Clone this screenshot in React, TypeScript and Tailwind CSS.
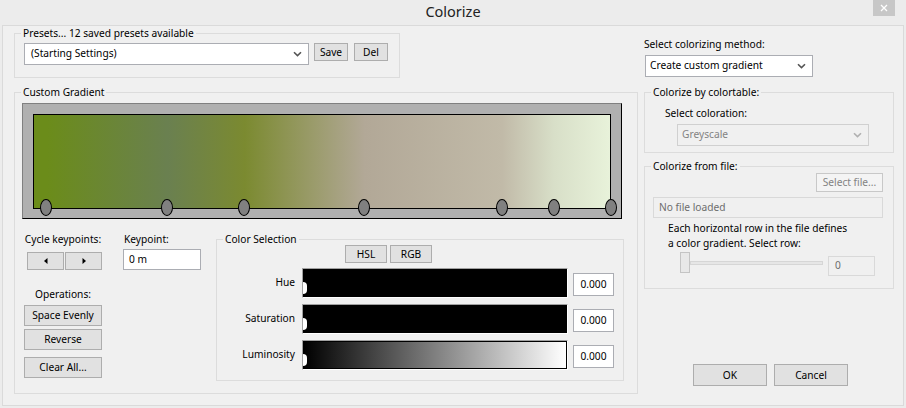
import React from 'react';

const btn = 'bg-[#e1e1e1] border border-[#adadad] flex items-center justify-center leading-none whitespace-nowrap';

const keypoints = [13, 134, 211, 331, 469, 521, 578];

function Chevron({ color = '#555' }: { color?: string }) {
    return (
        <svg width="9" height="6" viewBox="0 0 9 6">
            <path d="M1 1.2 L4.5 4.6 L8 1.2" fill="none" stroke={color} strokeWidth="1.6"/>
        </svg>
    );
}

function ColorBar({ label, luminosity }: { label: string; luminosity?: boolean }) {
    return (
        <div className="flex items-start">
            <div className="w-[78px] h-[30px] flex items-center justify-end">{label}</div>
            <div className="relative ml-[7px] w-[266px] h-[30px] border border-t-[#a0a0a0] border-l-[#a0a0a0] border-r-white border-b-white">
                {luminosity ? (
                    <div className="h-full w-full border border-black bg-[linear-gradient(to_right,#000,#fff)]"/>
                ) : (
                    <div className="h-full w-full bg-black"/>
                )}
                <div className="absolute left-0 top-[13px] w-[4px] h-[12px] bg-white rounded-r-full"/>
            </div>
            <div className="ml-[5px] mt-[5px] w-[41px] h-[23px] bg-white border border-[#abadb3] flex items-center justify-center">0.000</div>
        </div>
    );
}

export default function App() {
    return (
        <div className="w-[906px] h-[408px] bg-[#ececec] flex flex-col font-['Noto_Sans',sans-serif] text-[10.2px] text-black overflow-hidden">
            {/* title bar */}
            <div className="h-[25px] relative flex justify-center">
                <span className="text-[14.5px] leading-[23px] text-[#222]">Colorize</span>
                <div className="absolute right-[11px] top-0 w-[22px] h-[16px] bg-[#c7c7c7] flex items-center justify-center">
                    <svg width="8" height="8" viewBox="0 0 8 8">
                        <path d="M1 1L7 7M7 1L1 7" stroke="#fff" strokeWidth="1.3"/>
                    </svg>
                </div>
            </div>

            <div className="ml-[2px] w-[902px] h-[381px] border border-[#dadada] bg-[#f0f0f0] flex pl-[11px]">
                {/* left column */}
                <div className="w-[624px] flex flex-col">
                    <fieldset className="w-[386px] h-[52px] border border-[#dcdcdc]">
                        <legend className="ml-[6px] px-[2px] leading-[14px] whitespace-nowrap">Presets... 12 saved presets available</legend>
                        <div className="flex items-start mt-[3px] ml-[9px]">
                            <div className="w-[285px] h-[22px] bg-white border border-[#abadb3] flex items-center pl-[6px] pr-[6px]">
                                <span className="flex-1">(Starting Settings)</span>
                                <Chevron/>
                            </div>
                            <button className={`${btn} ml-[5px] w-[34px] h-[18px]`}>Save</button>
                            <button className={`${btn} ml-[6px] w-[34px] h-[18px]`}>Del</button>
                        </div>
                    </fieldset>

                    <fieldset className="mt-[7px] w-[624px] h-[309px] border border-[#dcdcdc]">
                        <legend className="ml-[6px] px-[2px] leading-[14px]">Custom Gradient</legend>
                        <div className="mt-[4px] ml-[7px] w-[600px] h-[116px] bg-[#b0b0b0] border border-t-[#808080] border-l-[#808080] border-r-black border-b-black pt-[10px] pl-[10px]">
                            <div className="relative w-[578px] h-[95px] border border-black bg-[linear-gradient(to_right,#6b8c1a_0%,#6b8c1a_2.3%,#6a8050_23.2%,#7b8a30_36.6%,#b2a897_57.4%,#c1baa8_81.3%,#d8dfc8_90.3%,#e8f2da_100%)]">
                                {keypoints.map((x) => (
                                    <div
                                        key={x}
                                        className="absolute top-[84px] w-[12px] h-[17px] rounded-[50%] bg-[#808080] border border-black"
                                        style={{ left: x - 7 }}
                                    />
                                ))}
                            </div>
                        </div>

                        <div className="flex items-start mt-[13px]">
                            <div className="ml-[9px] w-[78px] flex flex-col">
                                <div className="leading-[14px] text-center whitespace-nowrap -mx-[4px]">Cycle keypoints:</div>
                                <div className="flex gap-[1px] pl-[3px] mt-[6px]">
                                    <button className={`${btn} w-[37px] h-[18px]`}>
                                        <svg width="4" height="6" viewBox="0 0 4 6"><path d="M3.5 0 L0 3 L3.5 6Z" fill="#000"/></svg>
                                    </button>
                                    <button className={`${btn} w-[37px] h-[18px]`}>
                                        <svg width="4" height="6" viewBox="0 0 4 6"><path d="M0.5 0 L4 3 L0.5 6Z" fill="#000"/></svg>
                                    </button>
                                </div>
                                <div className="leading-[14px] text-center mt-[17px]">Operations:</div>
                                <button className={`${btn} mt-[4px] w-[78px] h-[21px]`}>Space Evenly</button>
                                <button className={`${btn} mt-[3px] w-[78px] h-[21px]`}>Reverse</button>
                                <button className={`${btn} mt-[7px] w-[78px] h-[21px]`}>Clear All...</button>
                            </div>

                            <div className="ml-[21px] w-[78px] flex flex-col">
                                <div className="leading-[14px] pl-[1px]">Keypoint:</div>
                                <div className="mt-[3px] h-[21px] bg-white border border-[#abadb3] flex items-center pl-[5px]">0 m</div>
                            </div>

                            <fieldset className="ml-[15px] w-[408px] h-[149px] border border-[#dcdcdc]">
                                <legend className="ml-[6px] px-[2px] leading-[14px]">Color Selection</legend>
                                <div className="flex gap-[3px] ml-[128px] -mt-[1px]">
                                    <button className={`${btn} w-[42px] h-[18px]`}>HSL</button>
                                    <button className={`${btn} w-[42px] h-[18px]`}>RGB</button>
                                </div>
                                <div className="flex flex-col gap-[6px] mt-[5px]">
                                    <ColorBar label="Hue"/>
                                    <ColorBar label="Saturation"/>
                                    <ColorBar label="Luminosity" luminosity/>
                                </div>
                            </fieldset>
                        </div>
                    </fieldset>
                </div>

                {/* right column */}
                <div className="ml-[6px] w-[250px] flex flex-col">
                    <div className="mt-[11px] leading-[14px]">Select colorizing method:</div>
                    <div className="mt-[4px] ml-[1px] w-[168px] h-[22px] bg-white border border-[#abadb3] flex items-center pl-[4px] pr-[6px]">
                        <span className="flex-1">Create custom gradient</span>
                        <Chevron/>
                    </div>

                    <fieldset className="mt-[8px] w-[250px] h-[68px] border border-[#dcdcdc]">
                        <legend className="ml-[6px] px-[2px] leading-[14px]">Colorize by colortable:</legend>
                        <div className="mt-[7px] ml-[20px] leading-[14px]">Select coloration:</div>
                        <div className="mt-[4px] ml-[32px] w-[192px] h-[22px] bg-[#f0f0f0] border border-[#d0d0d0] flex items-center pl-[4px] pr-[6px] text-[#838383]">
                            <span className="flex-1">Greyscale</span>
                            <Chevron color="#b0b0b0"/>
                        </div>
                    </fieldset>

                    <fieldset className="mt-[6px] w-[250px] h-[130px] border border-[#dcdcdc] flex flex-col">
                        <legend className="ml-[6px] px-[2px] leading-[14px]">Colorize from file:</legend>
                        <div className="flex justify-end pr-[10px]">
                            <button className="w-[67px] h-[19px] bg-[#f4f4f4] border border-[#c8c8c8] text-[#838383] flex items-center justify-center leading-none whitespace-nowrap">Select file...</button>
                        </div>
                        <div className="mt-[5px] ml-[8px] w-[230px] h-[21px] bg-[#f0f0f0] border border-[#d9d9d9] flex items-center pl-[5px] text-[#6d6d6d]">No file loaded</div>
                        <div className="mt-[3px] ml-[23px] leading-[15px] whitespace-nowrap">
                            Each horizontal row in the file defines<br/>a color gradient. Select row:
                        </div>
                        <div className="flex items-start mt-[1px] ml-[35px]">
                            <div className="w-[10px] h-[21px] bg-[#e8e8e8] border border-[#c4c4c4]"/>
                            <div className="mt-[9px] w-[133px] h-[4px] bg-[#e6e6e6] border border-[#d6d6d6]"/>
                            <div className="ml-[5px] mt-[4px] w-[47px] h-[20px] border border-[#d9d9d9] flex items-center pl-[6px] text-[#6d6d6d]">0</div>
                        </div>
                    </fieldset>

                    <div className="mt-auto mb-[19px] flex gap-[7px] pl-[49px]">
                        <button className={`${btn} w-[74px] h-[22px]`}>OK</button>
                        <button className={`${btn} w-[74px] h-[22px]`}>Cancel</button>
                    </div>
                </div>
            </div>
        </div>
    );
}
